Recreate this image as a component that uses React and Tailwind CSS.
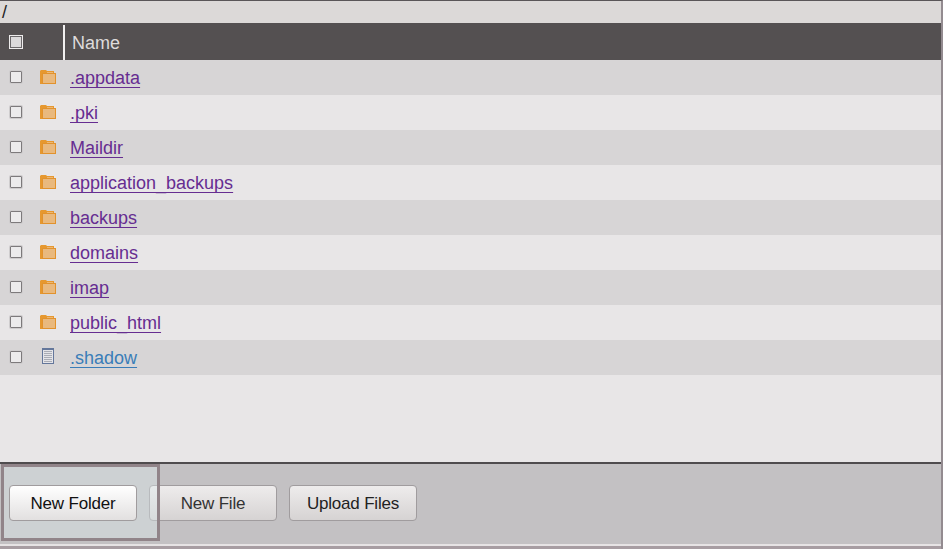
const rows = [
  { name: '.appdata', type: 'folder' },
  { name: '.pki', type: 'folder' },
  { name: 'Maildir', type: 'folder' },
  { name: 'application_backups', type: 'folder' },
  { name: 'backups', type: 'folder' },
  { name: 'domains', type: 'folder' },
  { name: 'imap', type: 'folder' },
  { name: 'public_html', type: 'folder' },
  { name: '.shadow', type: 'file' },
];

function FolderIcon() {
  return (
    <svg width="16" height="14" viewBox="0 0 16 14" className="block">
      <path d="M0 1L1 0H6L7 1H14V3H3L2 4V14H0Z" fill="#e6982f" />
      <rect x="7" y="2" width="6" height="1" fill="#eeb873" />
      <rect x="2.5" y="3.5" width="13" height="10" fill="#e9b97e" stroke="#e2922c" />
    </svg>
  );
}

function FileIcon() {
  return (
    <svg width="12" height="16" viewBox="0 0 12 16" className="block">
      <rect x="0.5" y="0.5" width="11" height="15" fill="#e4e4e8" stroke="#64779b" />
      <rect x="1" y="1" width="10" height="1" fill="#64779b" />
      <path d="M2 3.5H10M2 5.5H10M2 7.5H10M2 9.5H10M2 11.5H10M2 13.5H10" stroke="#a9acb5" />
    </svg>
  );
}

function ToolbarButton({ label, className }) {
  return (
    <button
      type="button"
      className={`w-[128px] h-[36px] pt-[2px] rounded-[4px] border border-[#a09c9e] bg-gradient-to-b text-[17px] tracking-[-0.2px] ${className}`}
    >
      {label}
    </button>
  );
}

export default function App() {
  return (
    <div className="relative w-[943px] h-[549px] overflow-hidden bg-[#e8e6e7] font-['Liberation_Sans',sans-serif] border-t border-[#5a5658] border-r-2 border-r-[#938b90] flex flex-col">
      <div className="h-[22px] bg-[#dcd9d8] px-[2px] text-[18px] leading-[22px] text-[#222]">/</div>

      <div className="h-[37px] bg-[#545051] flex items-center">
        <div className="w-[63px] h-full flex items-center pl-[9px]">
          <span className="block w-[14px] h-[14px] border border-[#eeecec] bg-[#dcdadb] shadow-[inset_0_0_0_1px_#6b686a]" />
        </div>
        <div className="self-end h-[35px] pl-[7px] pt-[1px] border-l-2 border-[#f2f0f0] text-[18px] leading-[35px] text-[#dedbdb]">
          Name
        </div>
      </div>

      <div className="flex-1">
        {rows.map((row, i) => (
          <div key={row.name} className={`h-[35px] flex items-center ${i % 2 === 0 ? 'bg-[#d7d5d6]' : 'bg-[#e8e6e7]'}`}>
            <div className="w-[40px] pl-[10px] pb-[1px]">
              <span className="block w-[12px] h-[12px] border border-[#7d7a7c] bg-[#ecebec] rounded-[1px] shadow-[0_0_0_1px_#cfcdce]" />
            </div>
            <div className="w-[30px]">
              {row.type === 'folder' ? (
                <div className="pb-[1px]">
                  <FolderIcon />
                </div>
              ) : (
                <div className="pl-[2px] pb-[3px]">
                  <FileIcon />
                </div>
              )}
            </div>
            <a
              href="#"
              className={`pt-[1px] text-[18px] underline underline-offset-[3px] [text-decoration-skip-ink:none] ${row.type === 'folder' ? 'text-[#662d91]' : 'text-[#3a7db8]'}`}
            >
              {row.name}
            </a>
          </div>
        ))}
      </div>

      <div className="h-[2px] bg-[#4f4c4e]" />
      <div className="h-[80px] bg-[#c3c1c3] flex gap-3 pl-[9px] pt-[21px]">
        <ToolbarButton label="New Folder" className="relative z-10 from-white to-[#e2e0e0] text-[#111]" />
        <ToolbarButton label="New File" className="from-[#eeecec] to-[#d6d3d3] text-[#333]" />
        <ToolbarButton label="Upload Files" className="from-[#eeecec] to-[#d6d3d3] text-[#222]" />
      </div>
      <div className="h-[2px] bg-[#e6e3e4]" />
      <div className="h-[3px] bg-[#a79da2]" />

      {/* highlight over the first button */}
      <div className="absolute left-[1px] top-[463px] w-[159px] h-[77px] border-[3px] border-[#918489] bg-[#dce8ec]/40 pointer-events-none" />
    </div>
  );
}
